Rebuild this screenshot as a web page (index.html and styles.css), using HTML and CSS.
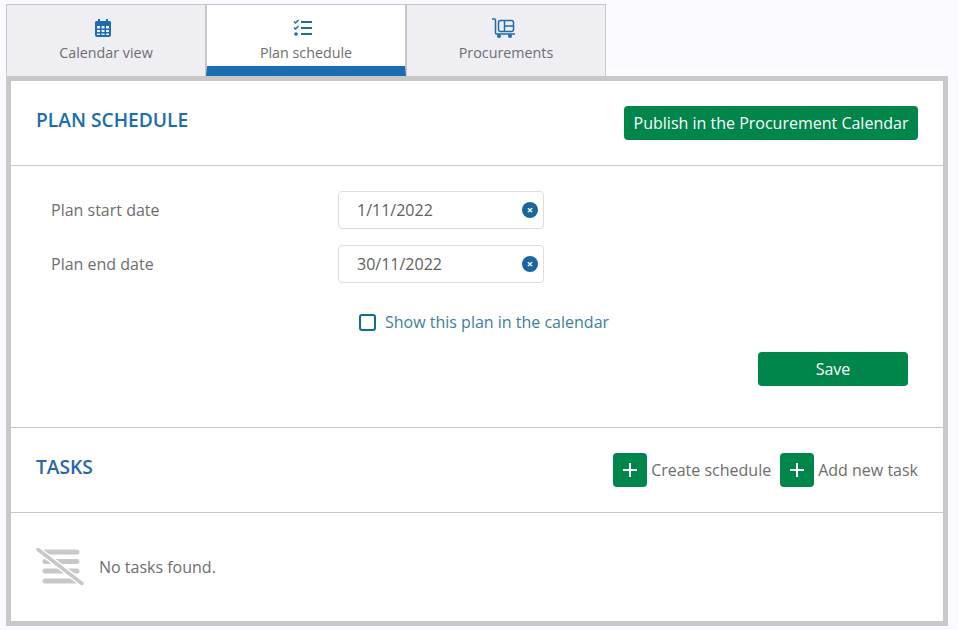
FILE: index.html
```html
<!DOCTYPE html>
<html lang="en">
<head>
<meta charset="utf-8">
<title>Plan schedule</title>
<link rel="stylesheet" href="styles.css">
</head>
<body>
<div class="tabs">
  <div class="tab">
    <svg class="tab-icon" width="18" height="20" viewBox="0 0 18 20"><path fill="#1b6cb0" fill-rule="evenodd" d="M4 1h2v2h6V1h2v2h1.500A1.500 1.500 0 0 1 17 4.500V17a2 2 0 0 1-2 2H3a2 2 0 0 1-2-2V4.500A1.500 1.500 0 0 1 2.500 3H4zM3 8v2.500h3V8zm4.500 0v2.500h3V8zM12 8v2.500h3V8zM3 12v2h3v-2zm4.500 0v2h3v-2zM12 12v2h3v-2zM3 15.500V17h3v-1.500zm4.500 0V17h3v-1.500zm4.500 0V17h3v-1.500z"/></svg>
    <span class="tab-label">Calendar view</span>
  </div>
  <div class="tab tab-active">
    <svg class="tab-icon" width="20" height="20" viewBox="0 0 20 20"><g fill="none" stroke="#1b6cb0"><path stroke-width="1.500" d="M1 3.500L2.500 5l3-3M1 9.500L2.500 11l3-3"/><path stroke-width="2.200" d="M8 4h11M8 10h11M8 16h11"/></g><circle cx="3" cy="16" r="1.800" fill="#1b6cb0"/></svg>
    <span class="tab-label">Plan schedule</span>
  </div>
  <div class="tab">
    <svg class="tab-icon" width="24" height="20" viewBox="0 0 24 20"><g fill="none" stroke="#1b6cb0" stroke-width="1.500"><path d="M1 1h2.500a1 1 0 0 1 1 1v13a1 1 0 0 0 1 1H24"/><rect x="7.500" y="2.500" width="15" height="11" rx="2"/><path d="M13.500 2.500v11M13.500 8h9"/></g><circle cx="8" cy="18" r="2" fill="#1b6cb0"/><circle cx="19" cy="18" r="2" fill="#1b6cb0"/></svg>
    <span class="tab-label">Procurements</span>
  </div>
</div>
<main class="panel">
  <section class="section head-section">
    <h2 class="title">PLAN SCHEDULE</h2>
    <button class="btn publish" type="button">Publish in the Procurement Calendar</button>
  </section>
  <section class="section form-section">
    <div class="field">
      <span class="field-label">Plan start date</span>
      <div class="date-input"><span>1/11/2022</span><i class="clear">×</i></div>
    </div>
    <div class="field">
      <span class="field-label">Plan end date</span>
      <div class="date-input"><span>30/11/2022</span><i class="clear">×</i></div>
    </div>
    <label class="check-row"><span class="check"></span><span>Show this plan in the calendar</span></label>
    <div class="save-row"><button class="btn save" type="button">Save</button></div>
  </section>
  <section class="section tasks-section">
    <h2 class="title tasks-title">TASKS</h2>
    <div class="actions">
      <div class="action"><span class="plus"><svg width="14" height="14" viewBox="0 0 14 14"><path stroke="#fff" stroke-width="2" d="M7 0v14M0 7h14"/></svg></span>Create schedule</div>
      <div class="action"><span class="plus"><svg width="14" height="14" viewBox="0 0 14 14"><path stroke="#fff" stroke-width="2" d="M7 0v14M0 7h14"/></svg></span>Add new task</div>
    </div>
  </section>
  <section class="empty">
    <svg width="48" height="38" viewBox="0 0 48 38"><g fill="none" stroke="#c8c8c8" stroke-linecap="round"><path stroke-width="5" d="M9 4h32M9 13.500h32M9 23h32M9 33h32"/></g><path stroke="#fff" stroke-width="6.500" d="M1 1l46 35"/><path stroke="#c8c8c8" stroke-width="3.500" stroke-linecap="round" d="M2 1.500l44 34"/></svg>
    <span>No tasks found.</span>
  </section>
</main>
</body>
</html>
```
FILE: styles.css
```css
* { box-sizing: border-box; }
html, body { margin: 0; height: 630px; overflow: hidden; }
body {
  background: #f9f9ff;
  padding: 4px 10px 4px 6px;
  font-family: "Open Sans", sans-serif;
  color: #6b6b6b;
  font-size: 16px;
}
.tabs { display: flex; height: 72px; }
.tab {
  width: 200px;
  background: #eeeef3;
  border: 1px solid #c8c8c8;
  border-bottom: 0;
  display: flex;
  flex-direction: column;
  align-items: center;
  padding-top: 13px;
}
.tab-icon { display: block; margin-right: 7px; flex: none; }
.tab-label { margin-top: 5px; font-size: 14.3px; line-height: 19px; color: #6d6d74; }
.tab-active { background: #fff; border-bottom: 10px solid #1b6cb0; }
.panel {
  border: 5px solid #c8c8c8;
  background: #fff;
  height: 550px;
  display: flex;
  flex-direction: column;
}
.section { border-bottom: 1px solid #c8c8c8; }
.head-section {
  height: 85px;
  display: flex;
  justify-content: space-between;
  align-items: flex-start;
  padding: 25px 25px 0;
}
.title { margin: 0; font-size: 19.2px; line-height: 28px; font-weight: 600; color: #1b6cb0; }
.btn {
  border: 0;
  background: #00854a;
  color: #fff;
  font: 500 16px/22px "Open Sans", sans-serif;
  border-radius: 4px;
}
.publish { height: 34px; width: 294px; padding: 0; }
.form-section { height: 262px; padding: 25px 35px 0 40px; }
.field { display: flex; align-items: center; height: 38px; margin-bottom: 16px; }
.field-label { width: 287px; color: #6e6e6e; }
.date-input {
  width: 206px;
  height: 38px;
  border: 1px solid #ddd;
  border-radius: 4px;
  display: flex;
  align-items: center;
  justify-content: space-between;
  padding: 0 5px 0 18px;
  color: #606060;
}
.clear {
  width: 16px;
  height: 16px;
  border-radius: 50%;
  background: #1b659f;
  color: #fff;
  font: bold 11px/15px "Open Sans", sans-serif;
  text-align: center;
}
.check-row { display: flex; align-items: center; gap: 9px; margin: 28px 0 0 308px; color: #3d7f9c; line-height: 22px; }
.check { width: 17px; height: 17px; border: 2px solid #0f6d8f; border-radius: 3px; background: #fff; }
.save-row { display: flex; justify-content: flex-end; margin-top: 19px; }
.save { width: 150px; height: 34px; }
.tasks-section { height: 85px; display: flex; justify-content: space-between; align-items: flex-start; padding: 25px 25px 0; }
.tasks-title { color: #2a66a8; }
.actions { display: flex; gap: 9px; }
.action { display: flex; align-items: center; gap: 4px; height: 34px; color: #6d6d6d; }
.plus { width: 34px; height: 34px; border-radius: 4px; background: #00854a; display: flex; align-items: center; justify-content: center; }
.empty { flex: 1; display: flex; align-items: center; gap: 15px; padding: 0 25px; color: #6e6e6e; }
```
